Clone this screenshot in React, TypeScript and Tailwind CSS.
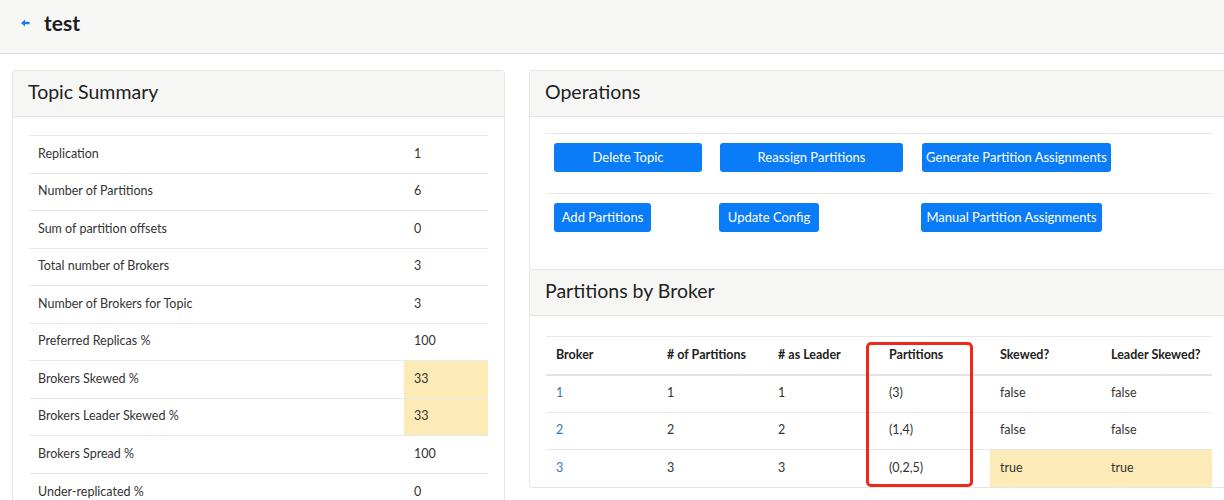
import { ReactNode } from 'react';

const summary: { label: string; value: string; warn?: boolean }[] = [
  { label: 'Replication', value: '1' },
  { label: 'Number of Partitions', value: '6' },
  { label: 'Sum of partition offsets', value: '0' },
  { label: 'Total number of Brokers', value: '3' },
  { label: 'Number of Brokers for Topic', value: '3' },
  { label: 'Preferred Replicas %', value: '100' },
  { label: 'Brokers Skewed %', value: '33', warn: true },
  { label: 'Brokers Leader Skewed %', value: '33', warn: true },
  { label: 'Brokers Spread %', value: '100' },
  { label: 'Under-replicated %', value: '0' },
];

const brokers = [
  { id: '1', count: '1', leader: '1', parts: '(3)', skewed: 'false', leaderSkewed: 'false' },
  { id: '2', count: '2', leader: '2', parts: '(1,4)', skewed: 'false', leaderSkewed: 'false' },
  { id: '3', count: '3', leader: '3', parts: '(0,2,5)', skewed: 'true', leaderSkewed: 'true' },
];

function Card({ title, children, className = '' }: { title: string; children: ReactNode; className?: string }) {
  return (
    <div className={`border border-[#e6e6e6] rounded-[3px] bg-white ${className}`}>
      <div className="h-[46px] bg-[#f6f6f5] border-b border-[#e3e3e3] flex items-center px-[15px] pb-[4px] text-[19.5px] text-[#222]">
        {title}
      </div>
      {children}
    </div>
  );
}

function Btn({ children, w }: { children: ReactNode; w: string }) {
  return (
    <button className={`h-[29px] ${w} rounded-[3px] bg-[#0b7cf7] text-white text-[13px] text-center`}>
      {children}
    </button>
  );
}

export default function App() {
  return (
    <div className="w-[1224px] h-[500px] overflow-hidden bg-white text-[#333] font-['Lato','Open_Sans',sans-serif]">
      <div className="h-[54px] bg-[#f7f7f6] border-b border-[#dedede] flex items-center pl-[21px] pb-[9px]">
        <svg width="9" height="8" viewBox="0 0 9 8" className="mt-[2px]">
          <path d="M0 4 L4 0.5 L4 2.8 L8.5 2.8 L8.5 5.2 L4 5.2 L4 7.5 Z" fill="#1a7ef0" />
        </svg>
        <span className="ml-[14px] text-[21px] font-bold text-[#1c1c1c] leading-none">test</span>
      </div>

      <div className="flex gap-[24px] pl-[12px] pt-[16px]">
        <Card title="Topic Summary" className="w-[493px] shrink-0">
          <div className="px-[16px] pt-[18px] pb-[16px]">
            <table className="w-full border-collapse text-[12.5px]">
              <tbody>
                {summary.map(row => (
                  <tr key={row.label} className="border-t border-[#e8e8e8]">
                    <td className="h-[37.5px] pl-[9px]">{row.label}</td>
                    <td className={`h-[37.5px] w-[84px] pl-[10px] ${row.warn ? 'bg-[#fcebb6]' : ''}`}>{row.value}</td>
                  </tr>
                ))}
              </tbody>
            </table>
          </div>
        </Card>

        <div className="w-[700px] shrink-0 flex flex-col">
          <Card title="Operations">
            <div className="px-[16px] pt-[16px] pb-[16px]">
              <div className="grid grid-cols-[166px_202px_1fr] border-t border-[#e8e8e8] h-[60px] items-start pt-[9px]">
                <div className="pl-[8px]"><Btn w="w-[148px]">Delete Topic</Btn></div>
                <div className="pl-[8px]"><Btn w="w-[183px]">Reassign Partitions</Btn></div>
                <div className="pl-[8px]"><Btn w="w-[189px]">Generate Partition Assignments</Btn></div>
              </div>
              <div className="grid grid-cols-[166px_202px_1fr] border-t border-[#e8e8e8] h-[60px] items-start pt-[9px]">
                <div className="pl-[8px]"><Btn w="w-[97px]">Add Partitions</Btn></div>
                <div className="pl-[7px]"><Btn w="w-[100px]">Update Config</Btn></div>
                <div className="pl-[7px]"><Btn w="w-[181px]">Manual Partition Assignments</Btn></div>
              </div>
            </div>
          </Card>

          <Card title="Partitions by Broker" className="-mt-px">
            <div className="px-[16px] pt-[20px]">
              <div className="relative">
                <table className="w-full border-collapse text-[12.5px] table-fixed">
                  <thead>
                    <tr className="border-t border-[#e8e8e8] border-b-2 border-b-[#e3e3e3]">
                      {['Broker', '# of Partitions', '# as Leader', 'Partitions', 'Skewed?', 'Leader Skewed?'].map(h => (
                        <th key={h} className="h-[38px] pl-[10px] text-left font-bold text-[#222]">{h}</th>
                      ))}
                    </tr>
                  </thead>
                  <tbody>
                    {brokers.map(b => {
                      const warn = b.skewed === 'true';
                      return (
                        <tr key={b.id} className="border-t border-[#e8e8e8]">
                          <td className="h-[37.5px] pl-[10px] text-[#3278c0]">{b.id}</td>
                          <td className="h-[37.5px] pl-[10px]">{b.count}</td>
                          <td className="h-[37.5px] pl-[10px]">{b.leader}</td>
                          <td className="h-[37.5px] pl-[10px]">{b.parts}</td>
                          <td className={`h-[37.5px] pl-[10px] ${warn ? 'bg-[#fcebb6]' : ''}`}>{b.skewed}</td>
                          <td className={`h-[37.5px] pl-[10px] ${warn ? 'bg-[#fcebb6]' : ''}`}>{b.leaderSkewed}</td>
                        </tr>
                      );
                    })}
                  </tbody>
                </table>
                <div className="absolute left-[320px] top-[6px] w-[107px] h-[145px] border-[3px] border-[#f0281c] rounded-[5px]" />
              </div>
            </div>
          </Card>
        </div>
      </div>
    </div>
  );
}
